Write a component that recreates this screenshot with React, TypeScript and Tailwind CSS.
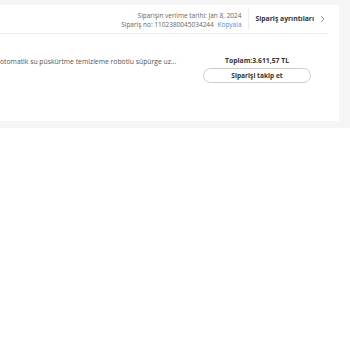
export default function App() {
  return (
    <div className="w-[350px] h-[350px] bg-white font-['Open_Sans',sans-serif] overflow-hidden">
      <div className="bg-[#f5f5f5] pt-[5px] pr-[11px] pb-[7px]">
        <div className="bg-white h-[116px] flex flex-col">
          <div className="mr-[11px] h-[29px] border-b border-[#eeeeee] flex items-center justify-end">
            <div className="pt-[2px] flex flex-col items-end text-[6.5px] leading-[9px] text-[#666]">
              <span>Siparişin verilme tarihi: Jan 8, 2024</span>
              <span>
                Sipariş no: 1102380045034244 <span className="ml-[2px] text-[#4a90e2]">Kopyala</span>
              </span>
            </div>
            <div className="ml-[6px] mr-[7px] h-[22px] w-px bg-[#eeeeee]" />
            <div className="flex items-center gap-[6px] pr-[3px]">
              <span className="text-[6.8px] font-bold text-[#333]">Sipariş ayrıntıları</span>
              <svg width="5" height="8" viewBox="0 0 5 8" fill="none" stroke="#777" strokeWidth="0.8">
                <path d="M1 1l3 3-3 3" />
              </svg>
            </div>
          </div>
          <div className="flex items-start pt-[21px]">
            <div className="flex-1 pt-[2px] text-[6.8px] leading-[10px] text-[#555] whitespace-nowrap">
              otomatik su püskürtme temizleme robotlu süpürge uz...
            </div>
            <div className="w-[108px] mr-[28px] flex flex-col items-center">
              <span className="text-[6.8px] leading-[11px] font-bold text-[#333]">Toplam:3.611,57 TL</span>
              <button className="mt-[2px] w-full h-[15px] rounded-full border border-[#cccccc] text-[6.6px] font-bold text-[#333]">
                Siparişi takip et
              </button>
            </div>
          </div>
        </div>
      </div>
    </div>
  );
}
